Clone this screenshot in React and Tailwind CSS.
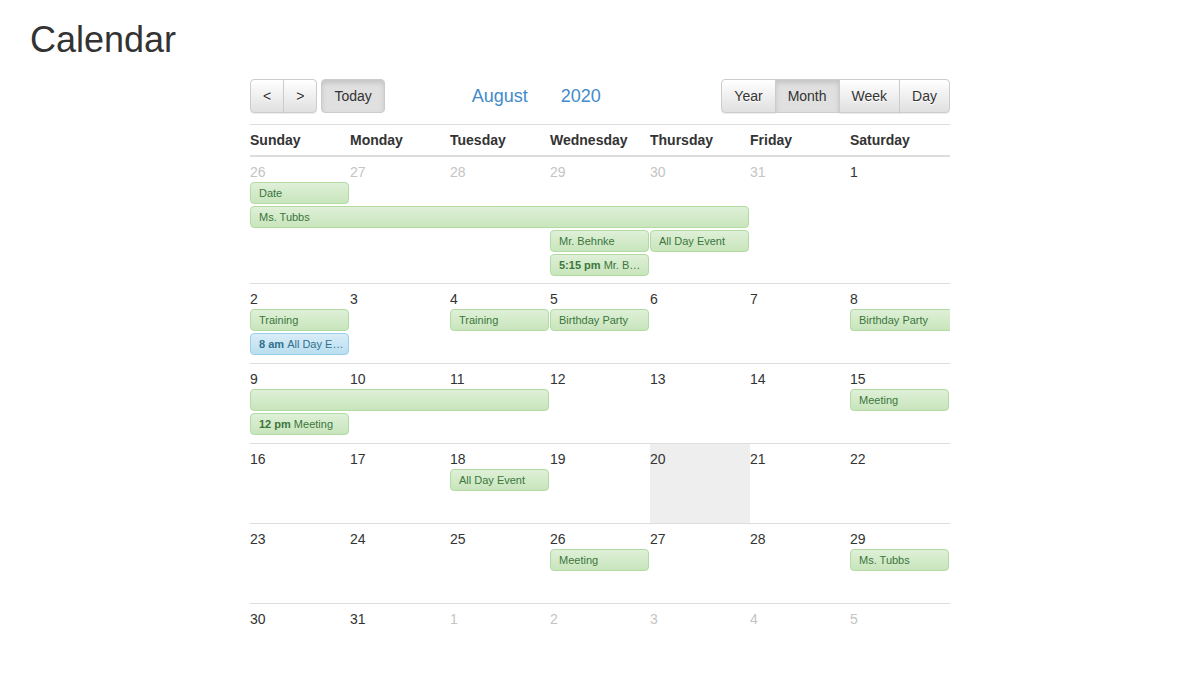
import React from 'react';

const colStart = ['', 'col-start-1', 'col-start-2', 'col-start-3', 'col-start-4', 'col-start-5', 'col-start-6', 'col-start-7'];
const colSpan = ['', 'col-span-1', 'col-span-2', 'col-span-3', 'col-span-4', 'col-span-5', 'col-span-6', 'col-span-7'];
const rowStart = ['', 'row-start-1', 'row-start-2', 'row-start-3', 'row-start-4', 'row-start-5'];

const days = ['Sunday', 'Monday', 'Tuesday', 'Wednesday', 'Thursday', 'Friday', 'Saturday'];

// each week: its day numbers, which ones are outside the month, and the event bars
const weeks = [
  {
    rows: 'grid-rows-[25px_24px_24px_24px_24px_5px]',
    dates: [26, 27, 28, 29, 30, 31, 1],
    muted: [0, 1, 2, 3, 4, 5],
    events: [
      { col: 1, span: 1, row: 2, title: 'Date' },
      { col: 1, span: 5, row: 3, title: 'Ms. Tubbs' },
      { col: 4, span: 1, row: 4, title: 'Mr. Behnke' },
      { col: 5, span: 1, row: 4, title: 'All Day Event' },
      { col: 4, span: 1, row: 5, time: '5:15 pm', title: 'Mr. Behnke' },
    ],
  },
  {
    rows: 'grid-rows-[25px_24px_24px_1fr]',
    dates: [2, 3, 4, 5, 6, 7, 8],
    muted: [],
    events: [
      { col: 1, span: 1, row: 2, title: 'Training' },
      { col: 3, span: 1, row: 2, title: 'Training' },
      { col: 4, span: 1, row: 2, title: 'Birthday Party' },
      { col: 7, span: 1, row: 2, title: 'Birthday Party', cont: true },
      { col: 1, span: 1, row: 3, time: '8 am', title: 'All Day Event', info: true },
    ],
  },
  {
    rows: 'grid-rows-[25px_24px_24px_1fr]',
    dates: [9, 10, 11, 12, 13, 14, 15],
    muted: [],
    events: [
      { col: 1, span: 3, row: 2, title: '' },
      { col: 7, span: 1, row: 2, title: 'Meeting' },
      { col: 1, span: 1, row: 3, time: '12 pm', title: 'Meeting' },
    ],
  },
  {
    rows: 'grid-rows-[25px_24px_1fr]',
    dates: [16, 17, 18, 19, 20, 21, 22],
    muted: [],
    today: 5,
    events: [{ col: 3, span: 1, row: 2, title: 'All Day Event' }],
  },
  {
    rows: 'grid-rows-[25px_24px_1fr]',
    dates: [23, 24, 25, 26, 27, 28, 29],
    muted: [],
    events: [
      { col: 4, span: 1, row: 2, title: 'Meeting' },
      { col: 7, span: 1, row: 2, title: 'Ms. Tubbs' },
    ],
  },
  {
    rows: 'grid-rows-[25px_1fr]',
    dates: [30, 31, 1, 2, 3, 4, 5],
    muted: [2, 3, 4, 5, 6],
    events: [],
  },
];

const btn =
  'h-[34px] px-3 text-sm leading-5 text-[#333] border border-[#ccc] bg-gradient-to-b from-white to-[#e0e0e0] shadow-[inset_0_1px_0_rgba(255,255,255,0.15),0_1px_1px_rgba(0,0,0,0.075)] [text-shadow:0_1px_0_#fff]';
const btnActive =
  'h-[34px] px-3 text-sm leading-5 text-[#333] border border-[#ccc] bg-[#e0e0e0] shadow-[inset_0_3px_5px_rgba(0,0,0,0.125)]';

function EventBar({ ev }) {
  const tone = ev.info
    ? 'from-[#d9edf7] to-[#b9def0] border-[#9acfea] text-[#31708f]'
    : 'from-[#dff0d8] to-[#c8e5bc] border-[#b2dba1] text-[#3c763d]';
  const shape = ev.cont ? 'w-full rounded-l border-r-0' : 'w-[calc(100%-1px)] rounded';
  return (
    <div className={`${colStart[ev.col]} ${colSpan[ev.span]} ${rowStart[ev.row]} self-start`}>
      <div className={`${shape} h-[22px] border bg-gradient-to-b ${tone} pl-2 pr-1 text-[11px] leading-5 truncate`}>
        {ev.time && <b className="font-bold">{ev.time} </b>}
        {ev.title}
      </div>
    </div>
  );
}

export default function App() {
  return (
    <div className="min-h-screen bg-white px-[30px] font-['Liberation_Sans',Arial,sans-serif] text-[#333]">
      <h1 className="mt-5 text-[36px] leading-[40px] font-normal">Calendar</h1>

      <div className="ml-[220px] mt-[19px] w-[700px] overflow-hidden">
        {/* Toolbar */}
        <div className="flex items-center h-[34px]">
          <div className="flex">
            <button className={`${btn} rounded-l`}>&lt;</button>
            <button className={`${btn} -ml-px rounded-r`}>&gt;</button>
          </div>
          <button className={`${btnActive} ml-1 rounded`}>Today</button>
          <div className="ml-[87px] flex text-[18px] text-[#428bca]">
            <span>August</span>
            <span className="ml-[33px]">2020</span>
          </div>
          <div className="ml-auto flex">
            <button className={`${btn} rounded-l`}>Year</button>
            <button className={`${btnActive} -ml-px`}>Month</button>
            <button className={`${btn} -ml-px`}>Week</button>
            <button className={`${btn} -ml-px rounded-r`}>Day</button>
          </div>
        </div>

        {/* Day names */}
        <div className="mt-[11px] grid grid-cols-[repeat(7,100px)] border-t border-b-2 border-[#ddd]">
          {days.map((d) => (
            <div key={d} className="py-[5px] text-sm leading-5 font-bold">
              {d}
            </div>
          ))}
        </div>

        {/* Weeks */}
        {weeks.map((w, wi) => (
          <div
            key={wi}
            className={`grid grid-cols-[repeat(7,100px)] ${w.rows} ${wi > 0 ? 'border-t border-[#ddd] min-h-[80px]' : ''}`}
          >
            {w.today && <div className={`${colStart[w.today]} row-span-full bg-[#eee]`} />}
            {w.dates.map((n, i) => (
              <div
                key={i}
                className={`${colStart[i + 1]} row-start-1 pt-[5px] text-sm leading-5 ${
                  w.muted.includes(i) ? 'text-[#c4c4c4]' : 'text-[#333]'
                }`}
              >
                {n}
              </div>
            ))}
            {w.events.map((ev, ei) => (
              <EventBar key={ei} ev={ev} />
            ))}
          </div>
        ))}
      </div>
    </div>
  );
}
